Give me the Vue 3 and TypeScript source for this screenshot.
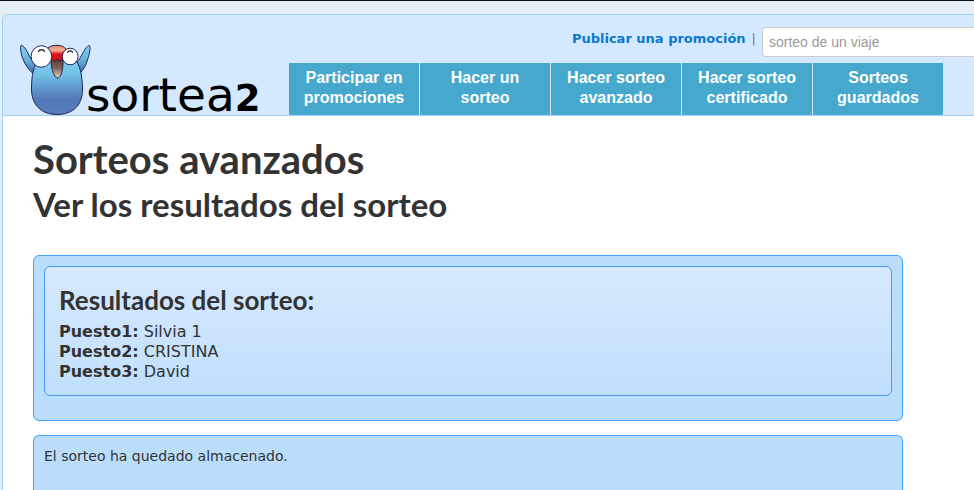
<script setup lang="ts">
import { ref } from 'vue'

interface NavItem {
  label: string
  href: string
}

interface Winner {
  place: string
  name: string
}

const query = ref<string>('')

const navItems: NavItem[] = [
  { label: 'Participar en promociones', href: '#promociones' },
  { label: 'Hacer un sorteo', href: '#sorteo' },
  { label: 'Hacer sorteo avanzado', href: '#avanzado' },
  { label: 'Hacer sorteo certificado', href: '#certificado' },
  { label: 'Sorteos guardados', href: '#guardados' },
]

const winners: Winner[] = [
  { place: 'Puesto1:', name: 'Silvia 1' },
  { place: 'Puesto2:', name: 'CRISTINA' },
  { place: 'Puesto3:', name: 'David' },
]
</script>

<template>
  <div class="page">
    <header class="header">
      <a class="logo" href="#inicio">
        <svg class="bird" viewBox="0 -1 72 72" aria-hidden="true">
          <defs>
            <linearGradient id="body-fill" x1="0" y1="0" x2="0" y2="1">
              <stop offset="0" stop-color="#7bcdee" />
              <stop offset="0.3" stop-color="#74c4e9" />
              <stop offset="0.75" stop-color="#5278b8" />
              <stop offset="1" stop-color="#5a7dbc" />
            </linearGradient>
            <linearGradient id="wing-fill" x1="0" y1="0" x2="0" y2="1">
              <stop offset="0" stop-color="#7fd4f0" />
              <stop offset="0.5" stop-color="#69b4df" />
              <stop offset="1" stop-color="#4a68ac" />
            </linearGradient>
            <linearGradient id="beak-fill" x1="0" y1="0" x2="0" y2="1">
              <stop offset="0" stop-color="#ee7d63" />
              <stop offset="0.3" stop-color="#f8b29b" />
              <stop offset="0.55" stop-color="#e3131b" />
              <stop offset="1" stop-color="#c90d18" />
            </linearGradient>
            <linearGradient id="mouth-fill" x1="0" y1="0" x2="0" y2="1">
              <stop offset="0" stop-color="#5b3a30" />
              <stop offset="0.5" stop-color="#806054" />
              <stop offset="1" stop-color="#ecd5c4" />
            </linearGradient>
          </defs>
          <g stroke="#202653" stroke-width="1" stroke-linejoin="round">
            <path d="M1 1.300C0 3.500 .8 10 3 15C5 20.500 8.500 25.500 13 29.500L16 20C12 17 9.500 12.500 7 7.500C5 3.500 2.600 1.300 1 1.300Z" fill="url(#wing-fill)" />
            <path d="M69.500 1.500C70.800 3.500 69.500 10 67.500 16C66 21 64 25 60.500 28.500L56 19C59.500 16 61.500 11.500 63.700 7.500C65.500 4 68 1.500 69.500 1.500Z" fill="url(#wing-fill)" />
            <path d="M17 18C12.500 25 11.500 35 11.500 45C11.500 60 20.500 70.500 37 70.500C54 70.500 62.800 60 62.500 45C62.300 34 61 25 57 18C49 9 26 9 17 18Z" fill="url(#body-fill)" />
            <path d="M31 15C31 25 34 34 37.800 34C41 34 43.500 25 43 14Z" fill="url(#mouth-fill)" />
            <path d="M28 4C31 1.500 34 1.300 37 1.300C41 1.300 44 2.500 46 5L44 16.500L41.500 15.500L39.500 17.500L37 15.500L34.500 17.500L32.500 15.500L30 17Z" fill="url(#beak-fill)" />
            <ellipse cx="21.400" cy="12.500" rx="10.300" ry="10.800" fill="#fff" />
            <ellipse cx="50.200" cy="12.500" rx="7.900" ry="8.300" fill="#fff" />
          </g>
          <g fill="none" stroke="#161616" stroke-width="1.200" stroke-linecap="round">
            <path d="M18.500 7.500C19.500 5 23.500 5 24.500 7.500" />
            <path d="M47.700 8.500C48.700 6.300 51.700 6.300 52.500 8.300" />
          </g>
        </svg>
        <span class="wordmark">sortea<b>2</b></span>
      </a>

      <div class="header-main">
        <form class="tools" @submit.prevent>
          <a class="publish" href="#publicar">Publicar una promoción</a>
          <span class="separator">|</span>
          <input v-model="query" class="search" type="search" aria-label="Buscar sorteo" placeholder="sorteo de un viaje" />
        </form>
        <nav class="nav">
          <a v-for="item in navItems" :key="item.href" class="nav-item" :href="item.href">{{ item.label }}</a>
        </nav>
      </div>
    </header>

    <main class="content">
      <h1>Sorteos avanzados</h1>
      <h2>Ver los resultados del sorteo</h2>

      <section class="box">
        <div class="results">
          <h3>Resultados del sorteo:</h3>
          <div v-for="winner in winners" :key="winner.place" class="winner">
            <strong>{{ winner.place }}</strong> {{ winner.name }}
          </div>
        </div>
      </section>

      <section class="box">
        <p class="notice">El sorteo ha quedado almacenado.</p>
      </section>
    </main>
  </div>
</template>

<style>
body {
  background: #e4eef5;
  border-top: 1px solid #111;
}
</style>

<style scoped>
.page {
  box-sizing: border-box;
  min-height: calc(100vh - 14px);
  margin: 13px 0 0 2px;
  border: 1px solid #9fd3f5;
  border-width: 1px 0 0 1px;
  border-radius: 6px 0 0 0;
  background: #fff;
  color: #333;
  font-family: Verdana, "DejaVu Sans", sans-serif;
  font-size: 14px;
  line-height: 20px;
}

.header {
  display: flex;
  align-items: flex-end;
  border-bottom: 1px solid #9fd3f5;
  border-radius: 5px 0 0 0;
  background: #d4e9ff;
}

.logo {
  display: flex;
  flex: none;
  align-items: flex-end;
  width: 269px;
  padding-left: 17px;
  color: #000;
  text-decoration: none;
}

.bird {
  flex: none;
  width: 72px;
  height: 72px;
}

.wordmark {
  margin-left: -6px;
  font-size: 47px;
  line-height: 32px;
}

.wordmark b {
  font-size: 37px;
}

.header-main {
  display: flex;
  flex: 1;
  flex-direction: column;
  gap: 6px;
  min-width: 0;
}

.tools {
  display: flex;
  align-items: flex-start;
  justify-content: flex-end;
  padding-top: 12px;
}

.publish {
  padding-top: 2px;
  color: #0b78d0;
  font-size: 13px;
  font-weight: 700;
  text-decoration: none;
}

.separator {
  padding: 2px 6px 0;
  color: #777;
  font-size: 13px;
}

.search {
  box-sizing: border-box;
  width: 212px;
  height: 30px;
  margin: 0;
  padding: 4px 6px;
  border: 1px solid #ccc;
  border-right: 0;
  border-radius: 4px 0 0 4px;
  outline: 0;
  background: #fff;
  color: #555;
  font: 14px/20px "Liberation Sans", Arial, sans-serif;
  appearance: none;
}

.search::placeholder {
  color: #999;
  opacity: 1;
}

.nav {
  display: flex;
  gap: 1px;
}

.nav-item {
  box-sizing: border-box;
  width: 130px;
  padding: 5px 12px 7px;
  background: #45a8cc;
  color: #fff;
  font: bold 16px/20px "Liberation Sans", Arial, sans-serif;
  text-align: center;
  text-decoration: none;
}

.content {
  max-width: 870px;
  padding: 23px 30px 0;
}

h1,
h2,
h3 {
  margin: 0;
  font-family: "Trebuchet MS", Lato, sans-serif;
  font-weight: 700;
  line-height: 40px;
}

h1 {
  font-size: 40px;
}

h2 {
  margin: 5px 0 31px;
  font-size: 33px;
}

h3 {
  margin-bottom: 2px;
  font-size: 26px;
}

.box {
  min-height: 144px;
  margin-bottom: 14px;
  padding: 10px;
  border: 1px solid #4aa3fb;
  border-radius: 6px;
  background: #bbddfc;
}

.box:last-child {
  min-height: 34px;
  margin-bottom: 0;
  border-bottom: 0;
  border-radius: 6px 6px 0 0;
}

.results {
  padding: 13px 14px;
  border: 1px solid #4a9bf5;
  border-radius: 6px;
  background: linear-gradient(#d6e9fe, #c0dffc);
  font-size: 16px;
}

.notice {
  margin: 0;
}
</style>
